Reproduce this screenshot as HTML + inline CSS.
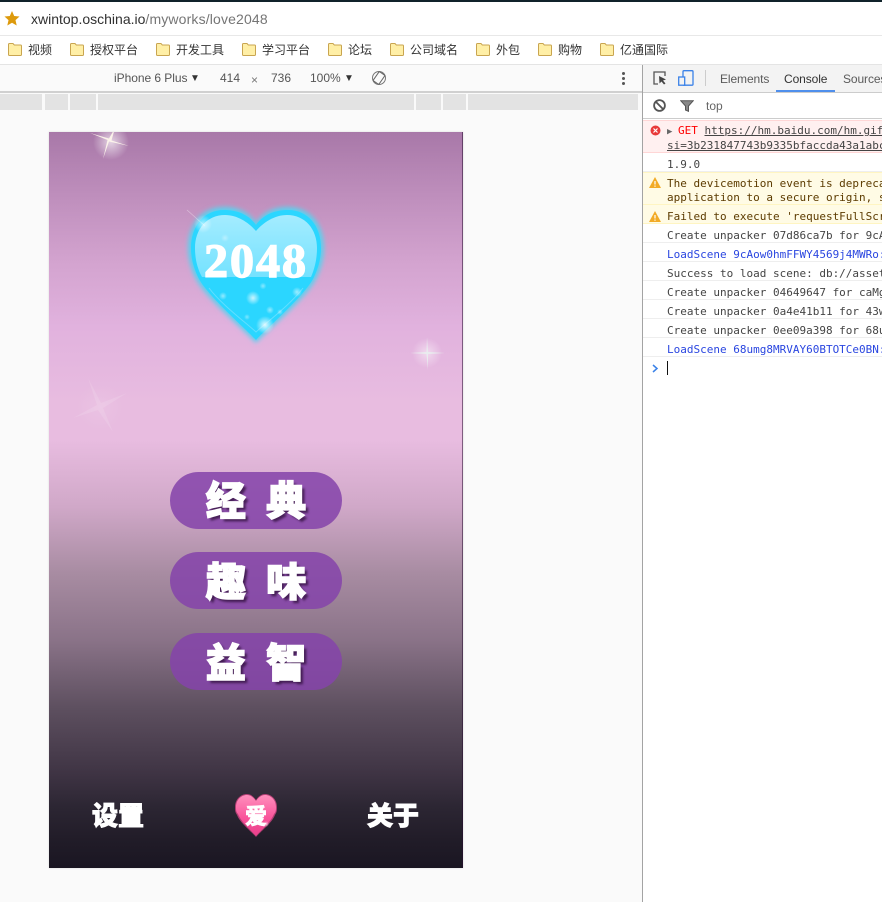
<!DOCTYPE html>
<html><head><meta charset="utf-8"><style>
html,body{margin:0;padding:0;background:#fff}
body{width:882px;height:902px;position:relative;overflow:hidden;font-family:"Liberation Sans","Noto Sans CJK SC",sans-serif}
.a{position:absolute}
.bm{position:absolute;top:43px;font-size:12px;line-height:15px;color:#333;white-space:nowrap}
.f{position:absolute;top:43px;width:14px;height:13px}
.r{position:absolute;left:643px;width:239px;height:19px;border-bottom:1px solid #eee;box-sizing:border-box;font:11px/24px "DejaVu Sans Mono","Liberation Mono",monospace;color:#444;padding-left:24px;white-space:nowrap;overflow:hidden}
.t{position:absolute;top:71px;font-size:12px;line-height:16px;color:#5a5a5a;white-space:nowrap;letter-spacing:-.1px}
.tb{position:absolute;top:71px;font-size:12px;line-height:15px;color:#555;white-space:nowrap}
.seg{position:absolute;top:94px;height:16px;background:#e3e3e3}
.btn{position:absolute;left:170px;width:172px;height:57px;border-radius:29px;background:rgba(133,68,170,.86)}
.btxt{position:absolute;left:170px;width:172px;text-align:center;font-family:"Noto Sans CJK SC",sans-serif;font-weight:900;font-size:40px;line-height:52px;word-spacing:11px;color:#fff;-webkit-text-stroke:1.4px #fff;text-shadow:3px 3px 2px rgba(40,10,50,.7);white-space:pre}
.low{position:absolute;font-family:"Noto Sans CJK SC",sans-serif;font-weight:900;font-size:26px;line-height:32px;color:#fff;-webkit-text-stroke:.9px #fff;white-space:nowrap}
</style></head><body>
<div class="a" style="left:0;top:0;width:882px;height:2px;background:#10222a"></div>
<svg class="a" style="left:4px;top:11px" width="16" height="15" viewBox="0 0 16 15"><path d="M8 0l2.200 5 5.300.5-4 3.600 1.200 5.400L8 11.700l-4.700 2.800 1.200-5.400-4-3.600 5.300-.5z" fill="#dd9a0c"/></svg>
<div class="a" style="left:31px;top:11px;font-size:14px;line-height:17px;color:#303030;white-space:nowrap">xwintop.oschina.io<span style="color:#757575;letter-spacing:.15px">/myworks/love2048</span></div>
<div class="a" style="left:0;top:35px;width:882px;height:1px;background:#e8e8e8"></div>

<svg width="0" height="0" style="position:absolute"><defs><symbol id="fo" viewBox="0 0 14 13"><path d="M.5 1.500C.5 1 1 .5 1.500 .5h3.500l1.300 1.500h6.200c.5 0 1 .5 1 1v8.500c0 .5-.5 1-1 1H1.500c-.5 0-1-.5-1-1z" fill="#ffefa6" stroke="#c9a550"/></symbol></defs></svg>
<svg class="f" style="left:8px"><use href="#fo"/></svg><div class="bm" style="left:28px">视频</div>
<svg class="f" style="left:70px"><use href="#fo"/></svg><div class="bm" style="left:90px">授权平台</div>
<svg class="f" style="left:156px"><use href="#fo"/></svg><div class="bm" style="left:176px">开发工具</div>
<svg class="f" style="left:242px"><use href="#fo"/></svg><div class="bm" style="left:262px">学习平台</div>
<svg class="f" style="left:328px"><use href="#fo"/></svg><div class="bm" style="left:348px">论坛</div>
<svg class="f" style="left:390px"><use href="#fo"/></svg><div class="bm" style="left:410px">公司域名</div>
<svg class="f" style="left:476px"><use href="#fo"/></svg><div class="bm" style="left:496px">外包</div>
<svg class="f" style="left:538px"><use href="#fo"/></svg><div class="bm" style="left:558px">购物</div>
<svg class="f" style="left:600px"><use href="#fo"/></svg><div class="bm" style="left:620px">亿通国际</div>
<div class="a" style="left:0;top:64px;width:882px;height:1px;background:#e4e4e4"></div>

<!-- viewport area -->
<div class="a" style="left:0;top:65px;width:642px;height:837px;background:#fafafa"></div>
<div class="a" style="left:0;top:91px;width:642px;height:2px;background:#d0d0d0"></div>
<div class="tb" style="left:114px;letter-spacing:-.05px">iPhone 6 Plus</div>
<div class="tb" style="left:190px;font-size:10px;color:#333">▼</div>
<div class="tb" style="left:220px">414</div>
<div class="tb" style="left:251px;top:73px;color:#777">×</div>
<div class="tb" style="left:271px">736</div>
<div class="tb" style="left:310px">100%</div>
<div class="tb" style="left:344px;font-size:10px;color:#333">▼</div>
<svg class="a" style="left:371px;top:70px" width="16" height="16" viewBox="0 0 16 16"><circle cx="8" cy="8" r="6.500" fill="none" stroke="#777"/><rect x="4.500" y="2.500" width="7" height="11" rx="1" fill="#fafafa" stroke="#666" transform="rotate(35 8 8)"/></svg>
<svg class="a" style="left:621px;top:71px" width="5" height="15"><circle cx="2.500" cy="2.500" r="1.500" fill="#555"/><circle cx="2.500" cy="7.500" r="1.500" fill="#555"/><circle cx="2.500" cy="12.500" r="1.500" fill="#555"/></svg>
<div class="seg" style="left:0;width:42px"></div><div class="seg" style="left:45px;width:23px"></div><div class="seg" style="left:70px;width:26px"></div><div class="seg" style="left:98px;width:316px"></div><div class="seg" style="left:416px;width:25px"></div><div class="seg" style="left:443px;width:23px"></div><div class="seg" style="left:468px;width:170px"></div>

<!-- phone -->
<div class="a" style="left:49px;top:132px;width:414px;height:736px;box-shadow:0 0 2px rgba(0,0,0,.14);background:linear-gradient(180deg,#a878a8 0,#bd8dbb 60px,#d3a3cf 130px,#e1b2de 195px,#e8bce0 270px,#e8bce0 308px,#d0a8c8 375px,#a88ca2 441px,#8a7388 508px,#5e5060 575px,#3f3444 641px,#2c2633 675px,#211c28 708px,#1a1622 736px);overflow:hidden">
<div class="a" style="right:0;top:0;width:1px;height:736px;background:rgba(40,15,50,.55)"></div>
<svg class="a" style="left:0;top:0" width="414" height="736" viewBox="0 0 414 736">
<defs>
<radialGradient id="g1"><stop offset="0" stop-color="#fff" stop-opacity=".9"/><stop offset="1" stop-color="#fff" stop-opacity="0"/></radialGradient>
<radialGradient id="g2"><stop offset="0" stop-color="#fff"/><stop offset="1" stop-color="#fff" stop-opacity="0"/></radialGradient>
<filter id="bl" x="-20%" y="-20%" width="140%" height="140%"><feGaussianBlur stdDeviation="2.500"/></filter>
<linearGradient id="hg" x1="0" y1="0" x2="0" y2="1"><stop offset="0" stop-color="#a4ecff"/><stop offset="1" stop-color="#74e2ff"/></linearGradient>
<linearGradient id="pg" x1="0" y1="0" x2="0" y2="1"><stop offset="0" stop-color="#ff8fbd"/><stop offset=".55" stop-color="#f9559b"/><stop offset="1" stop-color="#e93f8b"/></linearGradient>
</defs>
<!-- sparkle 1 -->
<circle cx="62" cy="10" r="18" fill="url(#g1)" opacity=".75"/>
<path d="M41 1L60 6.500 66-4 62.500 8.500 80 14 60 9.500 54 27 58.500 8z" fill="#fff8ec" opacity=".9"/>
<!-- sparkle 2 -->
<circle cx="378" cy="221" r="15" fill="url(#g1)" opacity=".55"/>
<path d="M378 205L379 220 396 221 379 222 379 238 377.500 222 361 221 377.500 220z" fill="#e8f0ee" opacity=".85"/>
<!-- sparkle 3 -->
<circle cx="51" cy="275" r="24" fill="url(#g1)" opacity=".1"/>
<path d="M39 246L52 271 78 261 54 276 64 300 49 278 24 286 48 273z" fill="#fff" opacity=".12"/>
<!-- big heart -->
<path d="M207 211C196 199 158 167 148 149 142 138 139 127 139 116 139 92 153 75 175 75 189 75 200 80 207 91 214 80 225 75 239 75 261 75 275 92 275 116 275 127 272 138 266 149 256 167 218 199 207 211Z" fill="#5cd0ee" filter="url(#bl)"/>
<path d="M207 208C196 196 160 165 150 147 145 137 142 127 142 116 142 94 155 78 175 78 189 78 200 83 207 93 214 83 225 78 239 78 259 78 272 94 272 116 272 127 269 137 264 147 254 165 218 196 207 208Z" fill="#2bd6ff"/>
<path d="M207 99C200 91 189 83 176 83 158 83 146 97 146 116 146 126 148 136 153 145H262C266 136 268 126 268 116 268 97 256 83 238 83 225 83 214 91 207 99Z" fill="url(#hg)"/>
<path d="M160 156C172 172 196 190 207 200 218 190 242 172 254 156" fill="none" stroke="#8fe6ff" stroke-width="1" opacity=".55"/>
<circle cx="154" cy="92" r="9" fill="url(#g2)" opacity=".6"/>
<path d="M138 78L156 94" stroke="#fff" stroke-width=".8" opacity=".35"/>
<circle cx="176" cy="106" r="4" fill="url(#g2)" opacity=".35"/>
<circle cx="204" cy="166" r="7" fill="url(#g2)" opacity=".75"/>
<circle cx="216" cy="193" r="9" fill="url(#g2)" opacity=".85"/>
<circle cx="221" cy="178" r="4" fill="url(#g2)" opacity=".5"/>
<circle cx="214" cy="154" r="3.500" fill="url(#g2)" opacity=".45"/>
<circle cx="174" cy="164" r="4" fill="url(#g2)" opacity=".5"/>
<circle cx="198" cy="185" r="3" fill="url(#g2)" opacity=".4"/>
<circle cx="248" cy="160" r="5" fill="url(#g2)" opacity=".55"/>
<circle cx="231" cy="180" r="3" fill="url(#g2)" opacity=".4"/>
<!-- small heart -->
<path d="M207 705C203 700 191 691 188 683 186 680 186 678 186 675 186 667 192 662 198 662 202 662 205 665 207 668 209 665 212 662 216 662 222 662 228 667 228 675 228 678 228 680 226 683 223 691 211 700 207 705Z" fill="#e9488f" opacity=".7"/>
<path d="M207 704C203 699 192 690 189 682 187 680 187 678 187 675 187 668 192 663 198 663 202 663 205 666 207 669 209 666 212 663 216 663 222 663 227 668 227 675 227 678 227 680 225 682 222 690 211 699 207 704Z" fill="url(#pg)"/>
<circle cx="217" cy="692" r="3" fill="url(#g2)" opacity=".7"/>
</svg>
<div class="a" style="left:130px;top:102px;width:154px;text-align:center;font-family:'Liberation Serif','DejaVu Serif',serif;font-weight:700;font-size:48px;line-height:56px;color:#fff;-webkit-text-stroke:1.4px #fff;letter-spacing:2px">2048</div>
<div class="a" style="left:183px;top:669px;width:48px;text-align:center;font-family:'Noto Sans CJK SC',sans-serif;font-weight:900;font-size:22px;line-height:28px;color:#fff;-webkit-text-stroke:.5px #fff">爱</div>
</div>

<div class="btn" style="top:472px"></div><div class="btn" style="top:552px"></div><div class="btn" style="top:633px"></div>
<div class="btxt" style="top:472px">经 典</div>
<div class="btxt" style="top:553px">趣 味</div>
<div class="btxt" style="top:634px">益 智</div>
<div class="low" style="left:92px;top:799px">设置</div>
<div class="low" style="left:367px;top:799px">关于</div>

<!-- devtools -->
<div class="a" style="left:642px;top:65px;width:1px;height:837px;background:#a3a3a3"></div>
<div class="a" style="left:643px;top:65px;width:239px;height:27px;background:#f3f3f3;border-bottom:1px solid #ccc;box-sizing:content-box"></div>
<svg class="a" style="left:652px;top:70px" width="16" height="16" viewBox="0 0 16 16"><path d="M6 14H2V2h11v4" fill="none" stroke="#555" stroke-width="1.300"/><path d="M7 6l7 3.500-3 1 2.500 3-1.500 1-2.500-3-2 2z" fill="#444"/></svg>
<svg class="a" style="left:678px;top:70px" width="16" height="16" viewBox="0 0 16 16"><rect x="5" y=".7" width="10" height="14.500" rx="1" fill="none" stroke="#3b82e8" stroke-width="1.300"/><rect x=".7" y="7" width="6" height="8.200" fill="#f3f3f3" stroke="#3b82e8" stroke-width="1.300"/></svg>
<div class="a" style="left:705px;top:70px;width:1px;height:16px;background:#ccc"></div>
<div class="t" style="left:720px">Elements</div>
<div class="t" style="left:784px;color:#333">Console</div>
<div class="a" style="left:776px;top:90px;width:59px;height:2px;background:#4f8fec"></div>
<div class="t" style="left:843px">Sources</div>
<svg class="a" style="left:653px;top:99px" width="13" height="13" viewBox="0 0 13 13"><circle cx="6.500" cy="6.500" r="5.400" fill="none" stroke="#555" stroke-width="1.800"/><path d="M2.800 2.800l7.400 7.400" stroke="#555" stroke-width="1.800"/></svg>
<svg class="a" style="left:680px;top:100px" width="14" height="12" viewBox="0 0 14 12"><path d="M.7.700h12.600L8.500 6v5.300l-3-1.300V6z" fill="#888" stroke="#555"/></svg>
<div class="a" style="left:706px;top:99px;font-size:12px;line-height:15px;color:#666">top</div>
<div class="a" style="left:643px;top:118px;width:239px;height:1px;background:#ccc"></div>

<div class="r" style="top:120px;height:33px;background:#fff0f0;border-top:1px solid #ffd6d6;border-bottom:1px solid #ffd6d6;line-height:14px;padding-top:3px"><span style="display:inline-block;width:11px;color:#666;font-size:9px">▶</span><span style="color:#f00">GET</span> <u>https://hm.baidu.com/hm.gif?</u><br><u>si=3b231847743b9335bfaccda43a1abcd</u></div>
<svg class="a" style="left:650px;top:125px" width="11" height="11" viewBox="0 0 11 11"><circle cx="5.500" cy="5.500" r="5" fill="#e83a3a"/><path d="M3.500 3.500l4 4M7.500 3.500l-4 4" stroke="#fff" stroke-width="1.200"/></svg>
<div class="r" style="top:153px">1.9.0</div>
<div class="r" style="top:172px;height:33px;background:#fffbe5;border-top:1px solid #fff5c2;border-bottom:1px solid #fff5c2;line-height:14px;padding-top:3px;color:#5c3b00"><div style="position:relative;top:1px">The devicemotion event is deprecated<br>application to a secure origin, such</div></div>
<svg class="a" style="left:649px;top:177px" width="12" height="11" viewBox="0 0 12 11"><path d="M6 0l6 11H0z" fill="#f2ab26"/><path d="M6 4v3.500M6 8.500v1.200" stroke="#fff" stroke-width="1.200"/></svg>
<div class="r" style="top:205px;background:#fffbe5;border-bottom:1px solid #fff5c2;color:#5c3b00">Failed to execute 'requestFullScreen</div>
<svg class="a" style="left:649px;top:211px" width="12" height="11" viewBox="0 0 12 11"><path d="M6 0l6 11H0z" fill="#f2ab26"/><path d="M6 4v3.500M6 8.500v1.200" stroke="#fff" stroke-width="1.200"/></svg>
<div class="r" style="top:224px">Create unpacker 07d86ca7b for 9cAow0</div>
<div class="r" style="top:243px;color:#2a46e0">LoadScene 9cAow0hmFFWY4569j4MWRo: 12</div>
<div class="r" style="top:262px">Success to load scene: db://assets/S</div>
<div class="r" style="top:281px">Create unpacker 04649647 for caMgxxx</div>
<div class="r" style="top:300px">Create unpacker 0a4e41b11 for 43wxxx</div>
<div class="r" style="top:319px">Create unpacker 0ee09a398 for 68umg8</div>
<div class="r" style="top:338px;color:#2a46e0">LoadScene 68umg8MRVAY60BTOTCe0BN: 34</div>
<svg class="a" style="left:652px;top:364px" width="7" height="9" viewBox="0 0 7 9"><path d="M1 1l4 3.500L1 8" fill="none" stroke="#3b82e8" stroke-width="1.500"/></svg>
<div class="a" style="left:667px;top:361px;width:1px;height:14px;background:#111"></div>
</body></html>
